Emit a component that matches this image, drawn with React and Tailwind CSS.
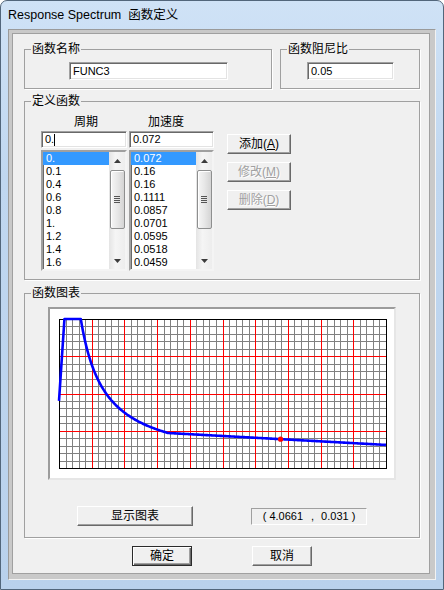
import React from 'react';

function Group({ title, className, children }) {
    return (
        <fieldset className={`border border-[#a0a0a0] shadow-[1px_1px_0_#ffffff] ${className}`}>
            <legend className="ml-[6px] px-[1px] text-[12px] leading-[15px]">{title}</legend>
            {children}
        </fieldset>
    );
}

function Field({ value, caret, className }) {
    return (
        <div className={`flex items-center bg-white border border-t-[#a0a0a0] border-l-[#a0a0a0] border-r-white border-b-white shadow-[inset_1px_1px_0_#696969,inset_-1px_-1px_0_#e3e3e3] pl-[3px] text-[11px] ${className}`}>
            <span>{value}</span>
            {caret && <span className="w-[1px] h-[12px] bg-black"></span>}
        </div>
    );
}

function Arrow({ up }) {
    return (
        <svg width="7" height="4" viewBox="0 0 7 4">
            <path d={up ? 'M3.5 0 L7 4 L0 4 Z' : 'M0 0 L7 0 L3.5 4 Z'} fill="#3c3c3c" />
        </svg>
    );
}

function ScrollBar() {
    return (
        <div className="w-[16px] h-full flex flex-col items-center bg-[linear-gradient(90deg,#e4e4e4,#f5f5f5_40%,#ededed)]">
            <div className="h-[18px] flex items-center justify-center"><Arrow up /></div>
            <div className="w-[15px] h-[59px] rounded-[2px] border border-[#8e8f8f] bg-[linear-gradient(90deg,#f6f6f6,#e7e7e7_50%,#d4d4d4)] shadow-[inset_1px_1px_0_#ffffff] flex flex-col items-center justify-center gap-[1px]">
                <div className="w-[6px] h-[1px] bg-[#555]"></div>
                <div className="w-[6px] h-[1px] bg-[#555]"></div>
                <div className="w-[6px] h-[1px] bg-[#555]"></div>
                <div className="w-[6px] h-[1px] bg-[#555]"></div>
            </div>
            <div className="flex-1"></div>
            <div className="h-[16px] flex items-center justify-center"><Arrow /></div>
        </div>
    );
}

function ListBox({ items }) {
    return (
        <div className="h-[121px] flex bg-white border-2 border-t-[#a0a0a0] border-l-[#a0a0a0] border-r-[#f4f4f4] border-b-[#f4f4f4] shadow-[inset_1px_1px_0_#696969]">
            <div className="flex-1">
                {items.map((t, i) => (
                    <div key={i} className={`h-[13px] leading-[13px] pl-[3px] text-[11px] ${i === 0 ? 'bg-[#3399ff] text-white' : ''}`}>{t}</div>
                ))}
            </div>
            <ScrollBar />
        </div>
    );
}

function Btn({ children, className, disabled, primary }) {
    const frame = primary
        ? 'border border-[#2b2b2b] shadow-[inset_1px_1px_0_#ffffff,inset_-1px_-1px_0_#696969,inset_-2px_-2px_0_#a0a0a0]'
        : 'border border-t-white border-l-white border-r-[#696969] border-b-[#696969] shadow-[inset_-1px_-1px_0_#a0a0a0]';
    return (
        <div className={`flex items-center justify-center bg-[#f0f0f0] text-[12px] leading-[14px] ${frame} ${disabled ? 'text-[#a0a0a0] [text-shadow:1px_1px_0_#ffffff]' : ''} ${className}`}>
            {children}
        </div>
    );
}

function spectrum(T) {
    if (T < 0.1) return 0.072 + (0.16 - 0.072) * T / 0.1;
    if (T <= 0.4) return 0.16;
    if (T <= 2.0) return 0.16 * Math.pow(0.4 / T, 0.9);
    return 0.16 * (Math.pow(0.2, 0.9) - 0.02 * (T - 2));
}

function Chart() {
    const X0 = 9, X1 = 336, Y0 = 10, Y1 = 159;
    const W = X1 - X0, H = Y1 - Y0;
    const px = T => X0 + T / 6 * W;
    const py = a => Y1 - a / 0.16 * H;
    const cols = Array.from({ length: 49 }, (_, i) => i + 1);
    const rows = Array.from({ length: 19 }, (_, i) => i + 1);
    const pts = [];
    for (let k = 0; k <= 300; k++) {
        const T = k * 0.02;
        pts.push(`${px(T).toFixed(2)},${py(spectrum(T)).toFixed(2)}`);
    }
    return (
        <svg width="344" height="169" viewBox="0 0 344 169">
            {cols.map(i => {
                const x = Math.round(X0 + i * W / 50) + 0.5;
                return <line key={'v' + i} x1={x} y1={Y0} x2={x} y2={Y1} stroke={i % 5 === 0 ? '#ff0000' : '#808080'} strokeWidth="1" shapeRendering="crispEdges" />;
            })}
            {rows.map(j => {
                const y = Math.round(Y0 + j * H / 20) + 0.5;
                return <line key={'h' + j} x1={X0} y1={y} x2={X1} y2={y} stroke={j % 5 === 0 ? '#ff0000' : '#808080'} strokeWidth="1" shapeRendering="crispEdges" />;
            })}
            {cols.filter(i => i % 5 === 0).map(i => {
                const x = Math.round(X0 + i * W / 50) + 0.5;
                return <line key={'r' + i} x1={x} y1={Y0} x2={x} y2={Y1} stroke="#ff0000" strokeWidth="1" shapeRendering="crispEdges" />;
            })}
            <rect x={X0 + 0.5} y={Y0 + 0.5} width={W} height={H} fill="none" stroke="#000000" strokeWidth="1" shapeRendering="crispEdges" />
            <polyline points={pts.join(' ')} fill="none" stroke="#0000ff" strokeWidth="2.6" strokeLinejoin="round" />
            <circle cx={px(4.0661)} cy={py(0.031)} r="2.6" fill="#ff0000" />
        </svg>
    );
}

export default function App() {
    const periods = ['0.', '0.1', '0.4', '0.6', '0.8', '1.', '1.2', '1.4', '1.6'];
    const accels = ['0.072', '0.16', '0.16', '0.1111', '0.0857', '0.0701', '0.0595', '0.0518', '0.0459'];
    return (
        <div className="w-[444px] h-[590px] flex flex-col overflow-hidden rounded-t-[7px] border border-[#52667b] bg-[linear-gradient(180deg,#cfe2f6_0%,#c0d7f0_30%,#b9d1ec_100%)] text-black font-['Liberation_Sans','Noto_Sans_CJK_SC',sans-serif]">
            <div className="h-[28px] flex items-center pl-[7px] text-[12.5px] whitespace-pre">Response Spectrum  函数定义</div>
            <div className="mx-[7px] h-[551px] bg-[#c9c9c9] border border-t-[#9a9a9a] border-l-[#9a9a9a] border-r-[#f2f2f2] border-b-[#f2f2f2] pt-[3px] pl-[3px] pr-[5px] pb-[5px]">
                <div className="h-full bg-[#f0f0f0] border border-[#a0a0a0] pl-[11px] pt-[8px]">
                    <div className="flex gap-[8px]">
                        <Group title="函数名称" className="w-[248px] h-[47px]">
                            <Field value="FUNC3" className="mt-[5px] ml-[44px] w-[159px] h-[18px]" />
                        </Group>
                        <Group title="函数阻尼比" className="w-[140px] h-[47px]">
                            <Field value="0.05" className="mt-[5px] ml-[26px] w-[87px] h-[18px]" />
                        </Group>
                    </div>

                    <Group title="定义函数" className="mt-[5px] w-[396px] h-[186px]">
                        <div className="flex mt-[6px] h-[14px] text-[12px] leading-[14px]">
                            <span className="ml-[49px]">周期</span>
                            <span className="ml-[50px]">加速度</span>
                        </div>
                        <div className="flex mt-[2px] ml-[16px]">
                            <div className="grid grid-cols-[86px_85px] gap-x-[2px] gap-y-[2px]">
                                <Field value="0." caret className="h-[17px]" />
                                <Field value="0.072" className="h-[17px]" />
                                <ListBox items={periods} />
                                <ListBox items={accels} />
                            </div>
                            <div className="ml-[13px] mt-[3px] flex flex-col gap-[8px]">
                                <Btn className="w-[64px] h-[20px]">添加(<span className="underline">A</span>)</Btn>
                                <Btn disabled className="w-[64px] h-[20px]">修改(<span className="underline">M</span>)</Btn>
                                <Btn disabled className="w-[64px] h-[20px]">删除(<span className="underline">D</span>)</Btn>
                            </div>
                        </div>
                    </Group>

                    <Group title="函数图表" className="mt-[6px] w-[396px] h-[252px]">
                        <div className="mt-[6px] ml-[23px] w-[348px] h-[173px] bg-white border-2 border-t-[#9c9c9c] border-l-[#9c9c9c] border-r-[#e6e6e6] border-b-[#e6e6e6]">
                            <Chart />
                        </div>
                        <div className="flex items-start mt-[26px] ml-[52px]">
                            <Btn className="w-[116px] h-[20px]">显示图表</Btn>
                            <div className="ml-[58px] mt-[2px] w-[116px] h-[17px] flex items-center justify-center border border-t-[#a0a0a0] border-l-[#a0a0a0] border-r-white border-b-white text-[11px] whitespace-pre">
                                <span>( 4.0661</span>
                                <span className="ml-[8px]">,</span>
                                <span className="ml-[7px]">0.031 )</span>
                            </div>
                        </div>
                    </Group>

                    <div className="flex mt-[8px] ml-[108px]">
                        <Btn primary className="w-[60px] h-[20px]">确定</Btn>
                        <Btn className="ml-[60px] w-[60px] h-[20px]">取消</Btn>
                    </div>
                </div>
            </div>
        </div>
    );
}
